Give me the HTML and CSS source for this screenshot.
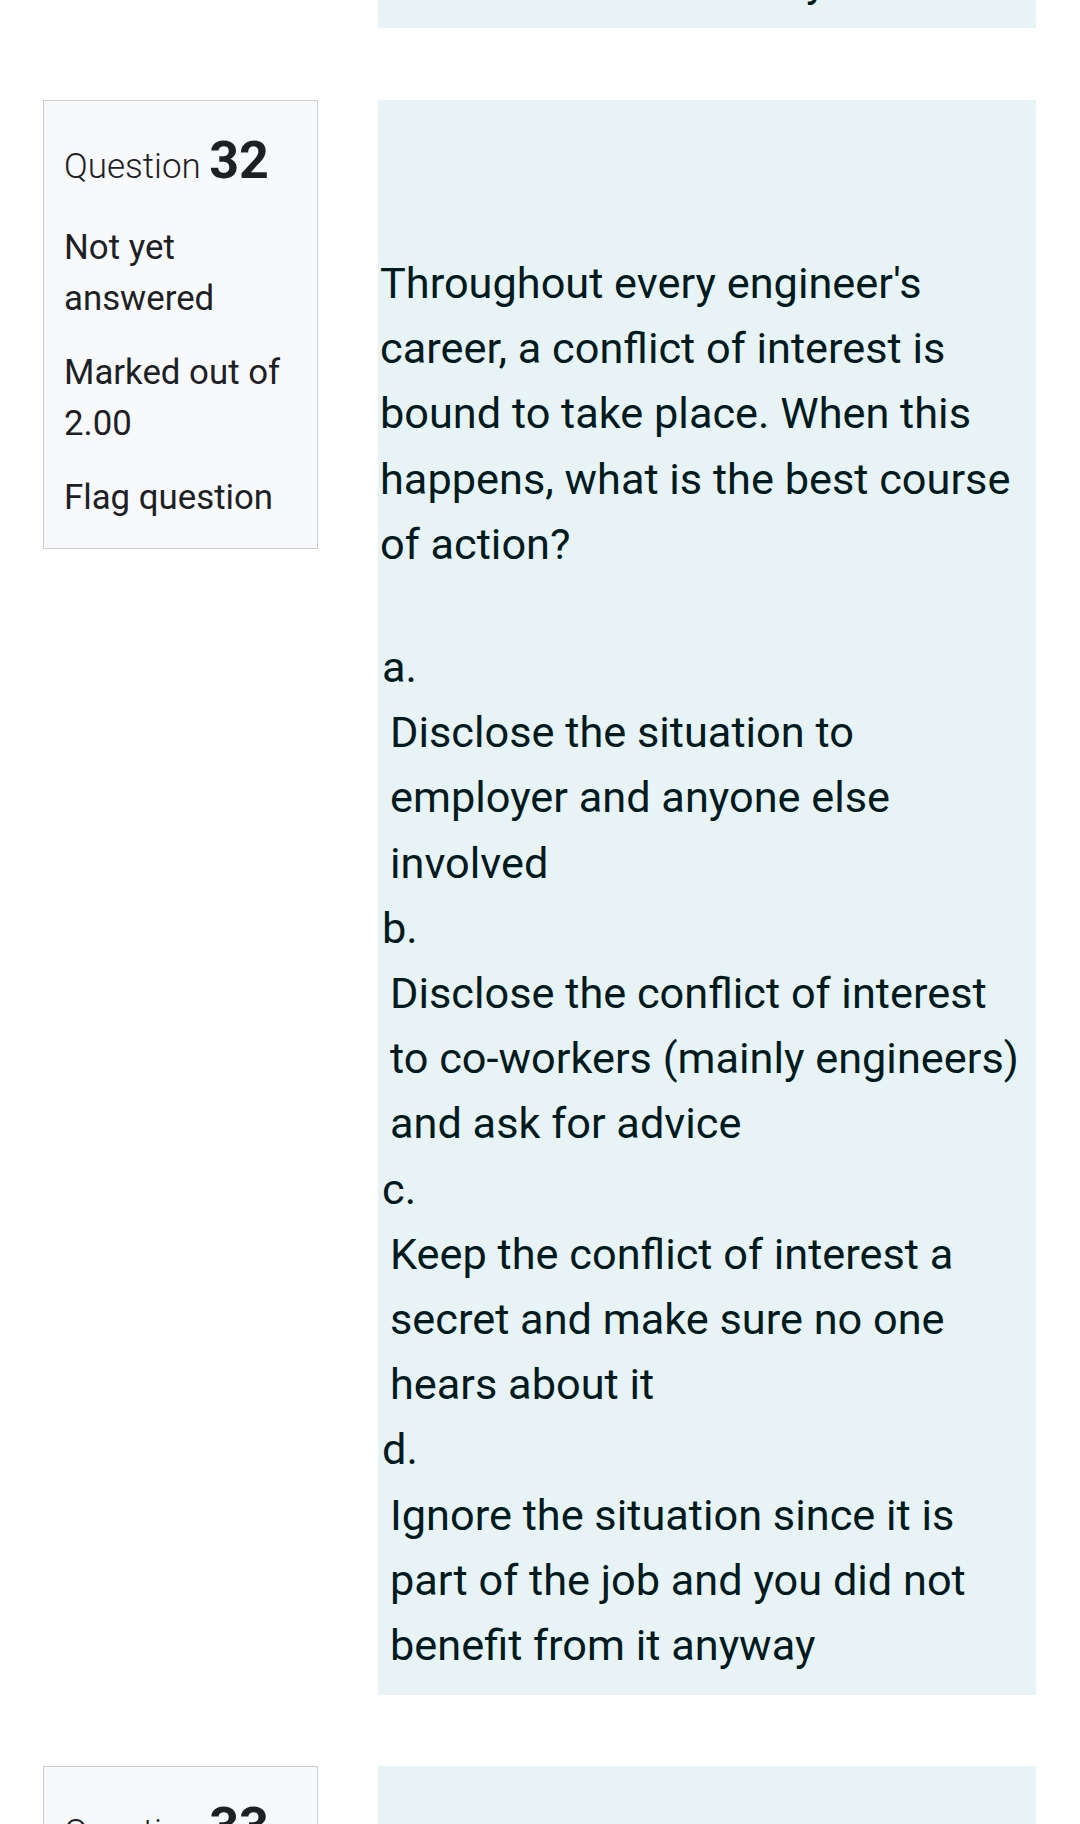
FILE: index.html
```html
<!DOCTYPE html>
<html lang="en">
<head>
<meta charset="utf-8">
<title>Quiz</title>
<link rel="stylesheet" href="styles.css">
</head>
<body>
<div class="page">
  <div class="que que-prev">
    <div class="info-spacer"></div>
    <div class="content content-clip">
      <p class="fragment"><span class="frag-glyph">y</span></p>
    </div>
  </div>

  <div class="que">
    <div class="info">
      <h3 class="qno-title">Question <span class="qno">32</span></h3>
      <div class="state">Not yet answered</div>
      <div class="grade">Marked out of 2.00</div>
      <div class="flag">Flag question</div>
    </div>
    <div class="content">
      <div class="qtext">Throughout every engineer's career, a conflict of interest is bound to take place. When this happens, what is the best course of action?</div>
      <div class="answer">
        <div class="option"><div class="answernumber">a.</div><div class="answertext">Disclose the situation to employer and anyone else involved</div></div>
        <div class="option"><div class="answernumber">b.</div><div class="answertext">Disclose the conflict of interest to co-workers (mainly engineers) and ask for advice</div></div>
        <div class="option"><div class="answernumber">c.</div><div class="answertext">Keep the conflict of interest a secret and make sure no one hears about it</div></div>
        <div class="option"><div class="answernumber">d.</div><div class="answertext">Ignore the situation since it is part of the job and you did not benefit from it anyway</div></div>
      </div>
    </div>
  </div>

  <div class="que">
    <div class="info">
      <h3 class="qno-title">Question <span class="qno">33</span></h3>
      <div class="state">Not yet answered</div>
      <div class="grade">Marked out of 2.00</div>
      <div class="flag">Flag question</div>
    </div>
    <div class="content content-next"></div>
  </div>
</div>
</body>
</html>
```
FILE: styles.css
```css
html, body {
  margin: 0;
  padding: 0;
  background: #ffffff;
}

body {
  font-family: Roboto, "Noto Sans", "Liberation Sans", sans-serif;
  color: #1d2125;
}

.page {
  padding: 0 44px 0 43px;
}

.que {
  display: flex;
  align-items: flex-start;
  gap: 60px;
  margin-bottom: 71px;
}

.que-prev {
  margin-bottom: 72px;
}

.info-spacer {
  width: 275px;
  flex: none;
}

.info {
  width: 275px;
  flex: none;
  box-sizing: border-box;
  background: #f8f9fa;
  border: 1px solid #cacdd1;
  padding: 30px 20px 25px;
  font-size: 34.8px;
  line-height: 51px;
}

.qno-title {
  margin: 0 0 25px;
  font-size: 35px;
  font-weight: 300;
  line-height: 60px;
}

.qno {
  font-size: 52px;
  font-weight: 700;
  line-height: 60px;
}

.state,
.grade {
  margin-bottom: 23px;
}

.content {
  flex: 1;
  min-width: 0;
  background: #e7f3f5;
  color: #001a1e;
  font-size: 43.3px;
  line-height: 65.2px;
  padding: 151px 0 17px 2px;
}

.content-clip {
  height: 28px;
  padding: 0;
  overflow: hidden;
}

.fragment {
  margin: -51px 0 0;
  padding-left: 428px;
}

.qtext {
  margin-bottom: 58px;
}

.answernumber {
  padding-left: 2px;
}

.answertext {
  padding-left: 10px;
  padding-right: 8px;
}

.content-next {
  height: 300px;
  padding: 0;
}
```
